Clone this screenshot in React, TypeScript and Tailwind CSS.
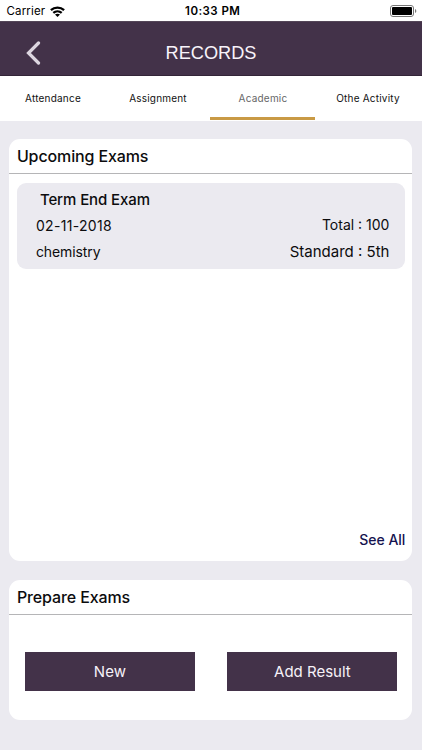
import React from "react";
import { clsx } from "clsx";

const tabs = ["Attendance", "Assignment", "Academic", "Othe Activity"];

function StatusBar() {
  return (
    <div className="grid h-[21px] grid-cols-3 items-center bg-white pr-[6px] pl-[6.5px] text-[11.5px] leading-[21px] text-black">
      <div className="flex items-center gap-[5px]">
        <span className="pt-[1px] tracking-[0.15px]">Carrier</span>
        <svg width="15" height="11" viewBox="0 0 15 11" fill="none" stroke="#000" strokeWidth="2.3">
          <path d="M.9 4.1C4.6 .7 10.4 .7 14.1 4.1" />
          <path d="M3.3 6.9C5.7 4.8 9.3 4.8 11.7 6.9" />
          <path d="M7.5 11L5 8.6C6.4 7.4 8.6 7.4 10 8.6Z" fill="#000" stroke="none" />
        </svg>
      </div>
      <span className="pt-[1px] pl-[3px] text-center font-semibold tracking-[0.45px] whitespace-nowrap">10:33 PM</span>
      <svg className="-mr-[1px] justify-self-end" width="27" height="12" viewBox="0 0 27 12">
        <rect x="0.5" y="0.5" width="23" height="11" rx="2.5" fill="none" stroke="#777" />
        <rect x="2" y="2" width="20" height="8" rx="1" fill="#000" />
        <path d="M25 4C26.8 4.7 26.8 7.3 25 8Z" fill="#777" />
      </svg>
    </div>
  );
}

function Header() {
  return (
    <header className="grid h-[55px] grid-cols-[1fr_auto_1fr] items-center border-t border-b border-t-[#544658] border-b-[#332538] bg-[#433249] pt-[9px]">
      <button className="ml-[26px] w-[15px]" aria-label="Back">
        <svg width="15" height="24" viewBox="0 0 15 24" fill="none" stroke="#ddd6e0" strokeWidth="3.2" strokeLinecap="round">
          <path d="M12.5 2L2.5 12L12.5 22" />
        </svg>
      </button>
      <h1 className="font-['Liberation_Sans',Arial,sans-serif] text-[18.2px] leading-[22px] text-[#f8f3fa]">RECORDS</h1>
    </header>
  );
}

function Tabs({ active }: { active: string }) {
  return (
    <nav className="grid h-[45px] grid-cols-4 bg-white pr-[2px]">
      {tabs.map((tab) => (
        <button
          key={tab}
          className={clsx(
            "mb-[1px] border-b-[3px] pt-[3px] pl-[1px] text-[10px] tracking-[0.2px]",
            tab === active ? "border-[#c99a45] text-[#666]" : "border-transparent text-[#111]"
          )}
        >
          {tab}
        </button>
      ))}
    </nav>
  );
}

function CardTitle({ children }: { children: React.ReactNode }) {
  return (
    <h2 className="border-b border-[#b5b5b7] pl-[7.5px] text-[16px] leading-[34px] font-medium tracking-[-0.12px]">
      {children}
    </h2>
  );
}

function ActionButton({ label }: { label: string }) {
  return <button className="h-[39px] w-[170px] bg-[#433249] pt-[2px] text-[15px] text-[#f6f1f8]">{label}</button>;
}

export default function App() {
  return (
    <div className="h-[750px] w-[422px] overflow-hidden bg-[#ebeaf0] font-[Inter,sans-serif] text-[#0c0c0e]">
      <StatusBar />
      <Header />
      <Tabs active="Academic" />

      <main className="flex flex-col gap-[19px] pt-[18px] pr-[9.6px] pl-[9.4px]">
        <section className="flex h-[422px] flex-col rounded-[11px] bg-white">
          <CardTitle>Upcoming Exams</CardTitle>
          <div className="mr-[7px] ml-[7.5px] mt-[8.5px] h-[86.5px] rounded-[9px] bg-[#ebeaf0] pt-[5px] pr-[16px] pl-[19px]">
            <h3 className="pl-[4px] text-[15px] leading-[24px] font-medium tracking-[-0.1px]">Term End Exam</h3>
            <div className="flex justify-between leading-[27px]">
              <span className="text-[14px] tracking-[0.32px]">02-11-2018</span>
              <span className="text-[14px] leading-[25px]">Total : 100</span>
            </div>
            <div className="flex justify-between leading-[25px]">
              <span className="text-[14px] tracking-[-0.1px]">chemistry</span>
              <span className="text-[15px]">Standard : 5th</span>
            </div>
          </div>
          <a href="#" className="mt-auto mr-[7px] mb-[11px] self-end text-[14px] leading-[20px] font-medium text-[#15134f]">
            See All
          </a>
        </section>

        <section className="h-[140px] rounded-[11px] bg-white">
          <CardTitle>Prepare Exams</CardTitle>
          <div className="flex justify-between pt-[37px] pr-[15px] pl-[15.5px]">
            <ActionButton label="New" />
            <ActionButton label="Add Result" />
          </div>
        </section>
      </main>
    </div>
  );
}
